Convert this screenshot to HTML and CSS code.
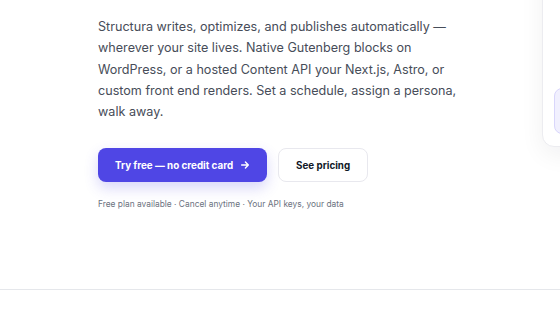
FILE: index.html
```html
<!DOCTYPE html>
<html lang="en">
<head>
<meta charset="UTF-8">
<meta name="viewport" content="width=device-width, initial-scale=1.0">
<title>Structura</title>
<link rel="stylesheet" href="styles.css">
</head>
<body>

<section class="hero">
  <div class="hero-copy">
    <p class="lead">Structura writes, optimizes, and publishes automatically — wherever your site lives. Native Gutenberg blocks on WordPress, or a hosted Content API your Next.js, Astro, or custom front end renders. Set a schedule, assign a persona, walk away.</p>
    <div class="actions">
      <a href="#" class="btn btn-primary">Try free — no credit card
        <svg width="10" height="10" viewBox="0 0 12 12" fill="none" stroke="currentColor" stroke-width="1.7" stroke-linecap="round" stroke-linejoin="round"><path d="M2 6h8M6.5 2.5 10 6l-3.5 3.5"/></svg>
      </a>
      <a href="#" class="btn btn-secondary">See pricing</a>
    </div>
    <p class="note">Free plan available · Cancel anytime · Your API keys, your data</p>
  </div>

  <div class="preview-card">
    <div class="preview-chip"></div>
  </div>
</section>

<div class="divider"></div>

</body>
</html>
```

FILE: styles.css
```css
body {
  font-family: Inter, "Noto Sans", sans-serif;
  background-color: #fff;
  margin: 0;
  padding: 0;
  overflow: hidden;
}

.hero {
  display: flex;
  align-items: flex-start;
  gap: 76px;
  padding: 16px 0 0 98px;
  height: 273px;
}

.hero-copy {
  flex: 0 0 368px;
}

.lead {
  margin: 0;
  font-size: 12.6px;
  line-height: 21.3px;
  color: #474d59;
}

.actions {
  display: flex;
  align-items: center;
  gap: 11px;
  margin-top: 26px;
}

.btn {
  display: inline-flex;
  align-items: center;
  gap: 7px;
  height: 34px;
  box-sizing: border-box;
  padding: 0 17px;
  border-radius: 8px;
  font-size: 9.8px;
  font-weight: 700;
  text-decoration: none;
}

.btn-primary {
  background-color: #4f46e5;
  color: #fff;
  box-shadow: 0 6px 14px rgba(79, 70, 229, 0.22);
}

.btn-secondary {
  background-color: #fff;
  color: #111827;
  border: 1px solid #e8e8ee;
}

.note {
  margin: 16px 0 0;
  font-size: 8.4px;
  line-height: 13px;
  color: #6b7280;
}

/* Card peeking in from the right */
.preview-card {
  flex: 0 0 300px;
  height: 300px;
  margin-top: -169px;
  background-color: #fff;
  border: 1px solid #ececf0;
  border-radius: 12px;
  box-shadow: 0 8px 24px rgba(17, 24, 39, 0.06);
  padding: 240px 0 0 11px;
  box-sizing: border-box;
}

.preview-chip {
  height: 44px;
  border-radius: 8px;
  background-color: #f1f0fe;
  border: 1px solid #d9d6fb;
}

.divider {
  border-top: 1px solid #e5e7eb;
}
```
